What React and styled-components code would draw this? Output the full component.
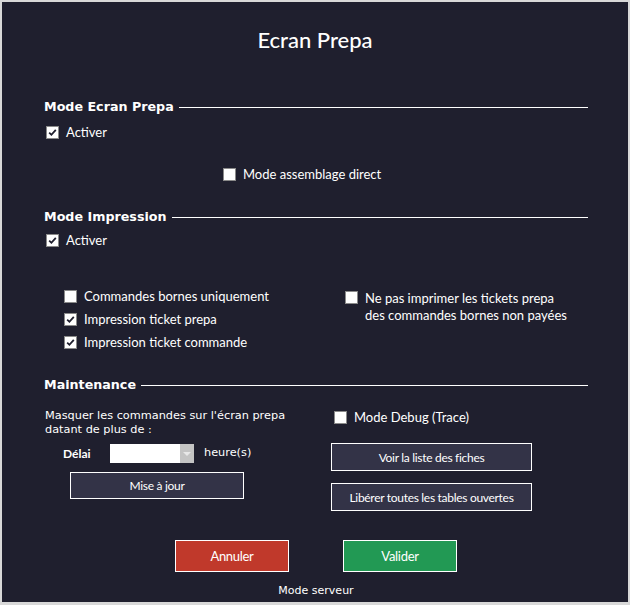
import React from 'react'
import styled, { createGlobalStyle } from 'styled-components'

const GlobalStyle = createGlobalStyle`
  html, body { margin: 0; padding: 0; background: #1f1f2e; }
  * { box-sizing: border-box; }
`

const Window = styled.div`
  width: 630px;
  height: 605px;
  background: #1f1f2e;
  border: 2px solid #d8d8d8;
  border-bottom-width: 3px;
  color: #fff;
  font-family: Lato, "Liberation Sans", sans-serif;
  padding: 0 40px 0 42px;
  display: flex;
  flex-direction: column;
`

const Title = styled.h1`
  margin: 25px 0 0;
  font-size: 22px;
  font-weight: 500;
  text-align: center;
  line-height: 26px;
  padding-right: 2px;
`

const Legend = styled.div`
  display: flex;
  align-items: center;
  gap: 5px;
  margin-top: ${p => p.$top}px;
  font-family: "DejaVu Sans", Verdana, sans-serif;
  font-weight: bold;
  font-size: 12.7px;
  line-height: 16px;
  &::after {
    content: '';
    flex: 1;
    height: 1px;
    background: #fff;
    margin-top: 1px;
  }
`

const CheckRow = styled.label`
  display: flex;
  align-items: ${p => (p.$top ? 'flex-start' : 'center')};
  gap: 7px;
  font-size: 13px;
  line-height: 17px;
  margin-top: ${p => p.$mt || 0}px;
  margin-left: ${p => p.$ml || 0}px;
`

const Box = styled.span`
  width: 13px;
  height: 13px;
  flex: none;
  background: #fff;
  border: 1px solid #8a8a8a;
  display: flex;
  align-items: center;
  justify-content: center;
  margin-top: ${p => (p.$top ? 1 : 0)}px;
`

const Check = ({ checked, label, top, ...rest }) => (
  <CheckRow $top={top} {...rest}>
    <Box $top={top}>
      {checked && (
        <svg width="9" height="9" viewBox="0 0 9 9">
          <path d="M1.2 4.6 L3.4 6.8 L7.8 1.8" stroke="#1f1f2e" strokeWidth="1.8" fill="none" />
        </svg>
      )}
    </Box>
    <span>{label}</span>
  </CheckRow>
)

const Columns = styled.div`
  display: grid;
  grid-template-columns: ${p => p.$cols};
  margin-top: ${p => p.$top}px;
`

const Stack = styled.div`
  display: flex;
  flex-direction: column;
  align-items: flex-start;
  gap: ${p => p.$gap || 0}px;
  padding-left: ${p => p.$pl || 0}px;
  padding-top: ${p => p.$pt || 0}px;
`

const Note = styled.p`
  margin: 0;
  font-family: "DejaVu Sans", Verdana, sans-serif;
  font-size: 11.3px;
  line-height: 14px;
  padding-left: 1px;
`

const DelayRow = styled.div`
  display: flex;
  align-items: center;
  margin-top: 7px;
  padding-left: 19px;
`

const DelayLabel = styled.span`
  font-size: 12px;
  font-weight: bold;
  width: 47px;
`

const Select = styled.div`
  width: 84px;
  height: 19px;
  background: #fff;
  display: flex;
  justify-content: flex-end;
`

const Arrow = styled.span`
  width: 14px;
  height: 100%;
  background: #c4c4c4;
  display: flex;
  align-items: center;
  justify-content: center;
  &::after {
    content: '';
    border-left: 4px solid transparent;
    border-right: 4px solid transparent;
    border-top: 4px solid #e8e8e8;
  }
`

const Unit = styled.span`
  font-family: "DejaVu Sans", Verdana, sans-serif;
  font-size: 11.3px;
  margin-left: 10px;
  margin-top: -2px;
`

const Button = styled.button`
  width: ${p => p.$w}px;
  height: ${p => p.$h}px;
  margin-left: ${p => p.$ml || 0}px;
  margin-top: ${p => p.$mt || 0}px;
  background: ${p => p.$bg || '#333347'};
  border: 1px solid #fff;
  color: #fff;
  font-family: Lato, "Liberation Sans", sans-serif;
  font-size: ${p => p.$fs || 12}px;
  letter-spacing: -0.3px;
  padding: 0;
  cursor: pointer;
`

const Footer = styled.div`
  display: flex;
  justify-content: center;
  gap: 54px;
  margin-top: 29px;
`

const ServerMode = styled.div`
  text-align: center;
  font-family: "DejaVu Sans", Verdana, sans-serif;
  font-size: 11px;
  margin-top: 12px;
`

export default function App() {
  return (
    <>
      <GlobalStyle />
      <Window>
        <Title>Ecran Prepa</Title>

        <Legend $top={46}>Mode Ecran Prepa</Legend>
        <Check checked label="Activer" $mt={9} $ml={2} />
        <Check label="Mode assemblage direct" $mt={25} $ml={179} />

        <Legend $top={26}>Mode Impression</Legend>
        <Check checked label="Activer" $mt={7} $ml={2} />

        <Columns $cols="301px 1fr" $top={39}>
          <Stack $gap={6} $pl={20}>
            <Check label="Commandes bornes uniquement" />
            <Check checked label="Impression ticket prepa" />
            <Check checked label="Impression ticket commande" />
          </Stack>
          <Stack $pt={2}>
            <Check top label={<>Ne pas imprimer les tickets prepa<br />des commandes bornes non payées</>} />
          </Stack>
        </Columns>

        <Legend $top={26}>Maintenance</Legend>

        <Columns $cols="287px 1fr" $top={16}>
          <Stack>
            <Note>Masquer les commandes sur l'écran prepa<br />datant de plus de :</Note>
            <DelayRow>
              <DelayLabel>Délai</DelayLabel>
              <Select><Arrow /></Select>
              <Unit>heure(s)</Unit>
            </DelayRow>
            <Button $w={174} $h={27} $ml={26} $mt={9}>Mise à jour</Button>
          </Stack>
          <Stack>
            <Check label="Mode Debug (Trace)" $ml={3} $mt={0} />
            <Button $w={201} $h={28} $mt={17}>Voir la liste des fiches</Button>
            <Button $w={201} $h={28} $mt={12}>Libérer toutes les tables ouvertes</Button>
          </Stack>
        </Columns>

        <Footer>
          <Button $w={114} $h={32} $bg="#c0392b" $fs={13}>Annuler</Button>
          <Button $w={114} $h={32} $bg="#229954" $fs={13}>Valider</Button>
        </Footer>
        <ServerMode>Mode serveur</ServerMode>
      </Window>
    </>
  )
}
